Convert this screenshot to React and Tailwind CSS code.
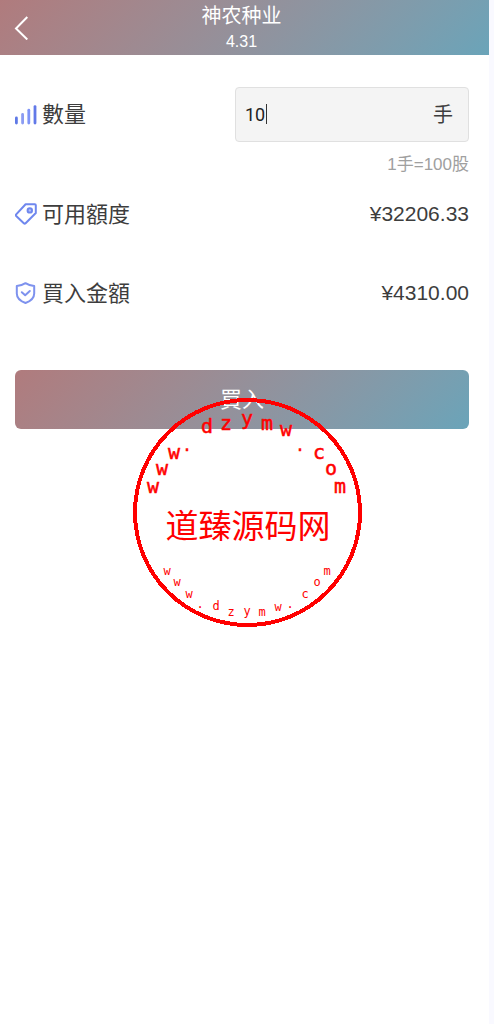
import React, { useState } from 'react';

const topLetters = [
  ['w', 20, 95], ['w', 29, 77], ['w', 41, 61], ['.', 54, 53], ['d', 74, 35], ['z', 93, 32], ['y', 114, 27],
  ['m', 134, 32], ['w', 153, 38], ['.', 167, 53], ['c', 186, 61], ['o', 198, 77], ['m', 207, 95],
];

const bottomLetters = [
  ['w', 34, 177], ['w', 44, 188], ['w', 56, 200], ['.', 67, 210], ['d', 83, 212], ['z', 98, 218], ['y', 114, 217],
  ['m', 129, 218], ['w', 145, 213], ['.', 157, 210], ['c', 172, 200], ['o', 184, 188], ['m', 194, 177],
];

function BarsIcon() {
  return (
    <svg width="22" height="22" viewBox="0 0 22 22" fill="none" strokeWidth="2.8" strokeLinecap="round" aria-hidden="true">
      <path d="M1.4 14V19" stroke="#5f79e6" />
      <path d="M7.6 10.4V19" stroke="#8b9cf2" />
      <path d="M13.8 6.2V19" stroke="#7f94f7" />
      <path d="M20 2.6V19" stroke="#6279e8" />
    </svg>
  );
}

function TagIcon() {
  return (
    <svg width="22" height="22" viewBox="0 0 22 22" fill="none" stroke="#6f87ee" strokeWidth="2" strokeLinejoin="round" aria-hidden="true">
      <path d="M10.6 1.2H19.8Q20.8 1.2 20.8 2.2V10L10.6 20.2Q9.7 21 8.8 20.2L1.2 13Q0.5 12.2 1.2 11.4Z" />
      <circle cx="14.8" cy="7.4" r="2.2" fill="#b5c1fa" />
    </svg>
  );
}

function ShieldIcon() {
  return (
    <svg width="22" height="22" viewBox="0 0 22 22" fill="none" stroke="#7e92ee" strokeWidth="2" strokeLinecap="round" strokeLinejoin="round" aria-hidden="true">
      <path d="M10.5 1.2Q14 3.4 19.2 4V11.5Q19.2 17.8 10.5 21Q1.8 17.8 1.8 11.5V4Q7 3.4 10.5 1.2Z" />
      <path d="M6.8 10.2L10.2 13.2L14.8 9" />
    </svg>
  );
}

function Stamp() {
  return (
    <svg width="229" height="229" viewBox="0 0 229 229" fill="#ff0000" textAnchor="middle" className="pointer-events-none absolute top-[398px] left-[133px]">
      <circle cx="114.5" cy="114.5" r="112.5" fill="none" stroke="#ff0000" strokeWidth="4" shapeRendering="crispEdges" />
      <g stroke="#ff0000" strokeWidth="0.5" className="font-['DejaVu_Sans_Mono',monospace]">
        {topLetters.map(([ch, x, y], i) => (
          <text key={i} x={x} y={y} className={ch === '.' ? 'text-[15px]' : 'text-[20px]'}>{ch}</text>
        ))}
      </g>
      <text x="115" y="140" className="font-['Noto_Sans_CJK_SC',sans-serif] text-[33px]">道臻源码网</text>
      <g className="font-['DejaVu_Sans_Mono',monospace] text-[12px]">
        {bottomLetters.map(([ch, x, y], i) => <text key={i} x={x} y={y}>{ch}</text>)}
      </g>
    </svg>
  );
}

function AmountRow({ icon, label, value }) {
  return (
    <div className="flex h-8 items-center justify-between">
      <div className="flex items-center gap-[5px] text-[22px]">
        {icon}
        <span>{label}</span>
      </div>
      <span className="text-[21px]">{value}</span>
    </div>
  );
}

export default function App() {
  const [quantity, setQuantity] = useState('10');

  return (
    <div className="relative min-h-screen bg-[#f9f9ff] pr-[5px] font-['Liberation_Sans','Noto_Sans_CJK_SC',sans-serif] text-[#3d3d3d]">
      <div className="min-h-screen bg-white">
        <header className="grid h-[55px] grid-cols-[42px_1fr_48px] items-center bg-linear-135 from-[#b07b7d] to-[#6aa4b9] text-white">
          <button type="button" aria-label="返回" className="flex h-full items-center pl-[14px]">
            <svg width="16" height="24" viewBox="0 0 16 24" fill="none" stroke="currentColor" strokeWidth="2">
              <path d="M13.3 1L2 12.5L13.3 23.5" />
            </svg>
          </button>
          <div className="text-center">
            <h1 className="text-[20px] leading-7">神农种业</h1>
            <p className="text-[16px] leading-6">4.31</p>
          </div>
        </header>

        <form onSubmit={e => e.preventDefault()} className="pt-8 pr-5 pl-[15px]">
          <div className="flex items-center justify-between">
            <label htmlFor="quantity" className="flex items-center gap-[5px] text-[22px]">
              <BarsIcon />
              <span>數量</span>
            </label>
            <div className="relative flex h-[55px] w-[234px] items-center rounded border border-[#e0e0e0] bg-[#f4f4f4] pr-[15px] pl-[9px] text-[20px]">
              <input id="quantity" type="text" inputMode="numeric" value={quantity} onChange={e => setQuantity(e.target.value)} className="w-full min-w-0 bg-transparent font-['Roboto',sans-serif] text-[18px] text-[#222] outline-none" />
              <span className="absolute top-4 left-[30px] h-5 w-px bg-[#333]" />
              <span>手</span>
            </div>
          </div>
          <p className="mt-[11px] text-right text-[17px] leading-6 text-[#a0a0a0]">1手=100股</p>

          <div className="mt-[21px]">
            <AmountRow icon={<TagIcon />} label="可用額度" value="¥32206.33" />
          </div>
          <div className="mt-[47px]">
            <AmountRow icon={<ShieldIcon />} label="買入金額" value="¥4310.00" />
          </div>

          <button type="submit" className="mt-[61px] h-[59px] w-full rounded-md bg-linear-135 from-[#b07b7d] to-[#6aa4b9] text-[22px] text-white">買入</button>
        </form>
      </div>
      <Stamp />
    </div>
  );
}
